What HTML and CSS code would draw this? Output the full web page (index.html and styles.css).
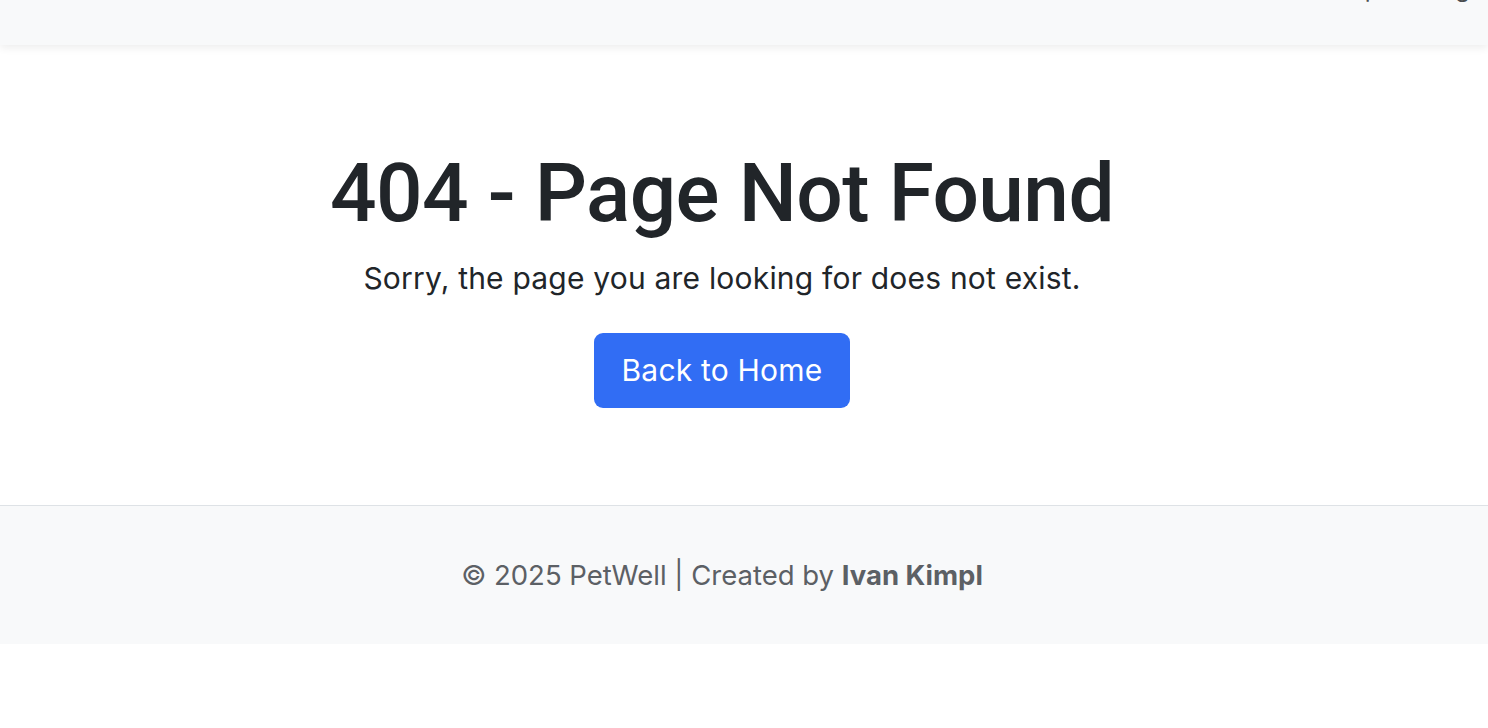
FILE: index.html
```html
<!DOCTYPE html>
<html lang="en">
<head>
<meta charset="utf-8">
<title>404 - Page Not Found</title>
<link rel="stylesheet" href="styles.css">
</head>
<body>
<nav class="navbar">
  <div class="nav-links">
    <a class="nav-link" href="#">Help</a>
    <a class="nav-link" href="#">Blog</a>
  </div>
</nav>
<main class="main">
  <h1 class="title">404 - Page Not Found</h1>
  <p class="lead">Sorry, the page you are looking for does not exist.</p>
  <a class="btn" href="#">Back to Home</a>
</main>
<footer class="footer">
  <p class="footer-text">© 2025 PetWell | Created by <strong>Ivan Kimpl</strong></p>
</footer>
</body>
</html>
```

FILE: styles.css
```css
* { box-sizing: border-box; }
html, body { margin: 0; padding: 0; }
body {
  font-family: Inter, "Noto Sans", "Liberation Sans", sans-serif;
  color: #212529;
  background: #ffffff;
}
.navbar {
  height: 45px;
  overflow: hidden;
  background: #f8f9fa;
  box-shadow: 0 3px 8px rgba(0, 0, 0, 0.07);
  position: relative;
  z-index: 1;
}
.nav-links {
  display: flex;
  justify-content: flex-end;
  gap: 40px;
  padding-right: 18px;
  margin-top: -26px;
  font-size: 24px;
  line-height: 30px;
}
.nav-link {
  color: #4a4d50;
  text-decoration: none;
}
.main {
  display: flex;
  flex-direction: column;
  align-items: center;
  padding: 99px 44px 97px 0;
}
.title {
  margin: 0;
  font-family: Roboto, Inter, "Liberation Sans", sans-serif;
  font-size: 82px;
  line-height: 98px;
  font-weight: 500;
  letter-spacing: -0.6px;
  color: #212529;
}
.lead {
  margin: 14px 0 0;
  font-size: 30px;
  line-height: 45px;
  font-weight: 400;
  letter-spacing: 0.2px;
}
.btn {
  margin-top: 32px;
  display: inline-block;
  padding: 15px 28px;
  font-size: 30px;
  line-height: 45px;
  color: #ffffff;
  background: #316df4;
  border-radius: 9px;
  text-decoration: none;
  letter-spacing: 0.2px;
}
.footer {
  border-top: 1px solid #dee2e6;
  background: #f8f9fa;
  padding: 50px 44px 50px 0;
  text-align: center;
}
.footer-text {
  margin: 0;
  font-size: 27.5px;
  line-height: 38px;
  color: #5c6065;
}
.footer-text strong {
  font-weight: 700;
}
```
